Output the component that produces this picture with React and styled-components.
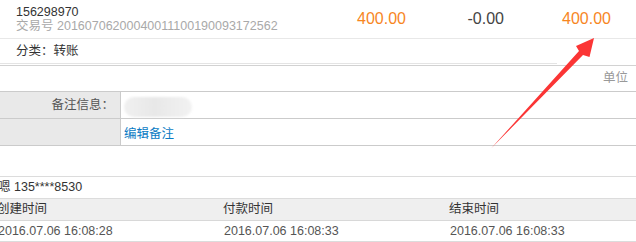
import React from 'react'
import styled, { createGlobalStyle } from 'styled-components'

const GlobalStyle = createGlobalStyle`
  html, body {
    margin: 0;
    padding: 0;
    background: #fff;
  }
  body {
    font-family: "Liberation Sans", "Noto Sans CJK SC", sans-serif;
    font-size: 12.5px;
    color: #333;
  }
`

const times = [
  { label: `创建时间`, value: `2016.07.06 16:08:28` },
  { label: `付款时间`, value: `2016.07.06 16:08:33` },
  { label: `结束时间`, value: `2016.07.06 16:08:33` },
]

export default function App() {
  return (
    <Page>
      <GlobalStyle />
      <Summary>
        <TradeInfo>
          <div>156298970</div>
          <TradeNo>交易号 20160706200040011100190093172562</TradeNo>
        </TradeInfo>
        <Amount tone={`orange`}>400.00</Amount>
        <Amount>-0.00</Amount>
        <Amount tone={`orange`}>400.00</Amount>
      </Summary>
      <Category>分类：转账</Category>
      <Divider />
      <UnitRow>单位</UnitRow>
      <NoteTable>
        <NoteRow>
          <NoteLabel>备注信息：</NoteLabel>
          <NoteCell>
            <Redacted />
          </NoteCell>
        </NoteRow>
        <NoteRow>
          <NoteLabel />
          <NoteCell>
            <EditLink>编辑备注</EditLink>
          </NoteCell>
        </NoteRow>
      </NoteTable>
      <Contact>嗯 135****8530</Contact>
      <TimeGrid>
        {times.map(({ label }) => (
          <TimeHead key={label}>{label}</TimeHead>
        ))}
        {times.map(({ label, value }) => (
          <TimeValue key={label}>{value}</TimeValue>
        ))}
      </TimeGrid>
      <Arrow viewBox='0 0 636 242'>
        <polygon
          points='594,38 589.5,57 583,55 491,148.5 579,51 576,46'
          fill='#fb3535'
        />
      </Arrow>
    </Page>
  )
}

const Page = styled.div`
  position: relative;
  width: 636px;
  height: 242px;
  overflow: hidden;
`

const Summary = styled.div`
  display: grid;
  grid-template-columns: 1fr 100px 98px 107px;
  align-items: center;
  height: 38px;
  padding-right: 25px;
  border-bottom: 1px solid #e8e8e8;
`

const TradeInfo = styled.div`
  align-self: start;
  padding: 5px 0 0 16px;
  line-height: 14px;
  white-space: nowrap;
`

const TradeNo = styled.div`
  color: #a9a9a9;
`

const Amount = styled.div`
  text-align: right;
  font-size: 16px;
  color: ${({ tone }) => (tone === `orange` ? `#f7861f` : `#444`)};
`

const Category = styled.div`
  width: 541px;
  height: 24px;
  line-height: 24px;
  padding-left: 16px;
  border-bottom: 1px solid #e4e4e4;
`

const Divider = styled.div`
  height: 1px;
  margin-top: 1px;
  background: #d2d2d2;
`

const UnitRow = styled.div`
  height: 25px;
  line-height: 25px;
  text-align: right;
  padding-right: 8px;
  color: #999;
`

const NoteTable = styled.div`
  border-top: 1px solid #cbcbcb;
`

const NoteRow = styled.div`
  display: grid;
  grid-template-columns: 121px 1fr;
  height: 26px;
  border-bottom: 1px solid #cbcbcb;
`

const NoteLabel = styled.div`
  background: #e9e9e9;
  border-right: 1px solid #cbcbcb;
  text-align: right;
  padding-right: 6px;
  line-height: 26px;
  color: #555;
`

const NoteCell = styled.div`
  display: flex;
  align-items: center;
  padding-left: 3px;
`

const Redacted = styled.span`
  display: block;
  width: 68px;
  height: 20px;
  margin-top: 4px;
  border-radius: 10px;
  background: linear-gradient(to right, #f0f0f0, #e8e8e8 45%, #f2f2f2);
  filter: blur(1px);
`

const EditLink = styled.a`
  color: #0a7bc4;
  text-decoration: none;
  cursor: pointer;
`

const Contact = styled.div`
  margin: 30px 0 0 -2px;
  height: 21px;
  line-height: 21px;
  border-top: 1px solid #dcdcdc;
  border-bottom: 1px solid #dcdcdc;
`

const TimeGrid = styled.div`
  display: grid;
  grid-template-columns: 226px 226px 1fr;
  margin-left: -3px;
`

const TimeHead = styled.div`
  height: 21px;
  line-height: 21px;
  background: #efefef;
  border-bottom: 1px solid #d8d8d8;
`

const TimeValue = styled.div`
  height: 20px;
  line-height: 20px;
  padding-left: 1px;
  color: #555;
  border-bottom: 1px solid #dcdcdc;
`

const Arrow = styled.svg`
  position: absolute;
  left: 0;
  top: 0;
  width: 636px;
  height: 242px;
  pointer-events: none;
`
